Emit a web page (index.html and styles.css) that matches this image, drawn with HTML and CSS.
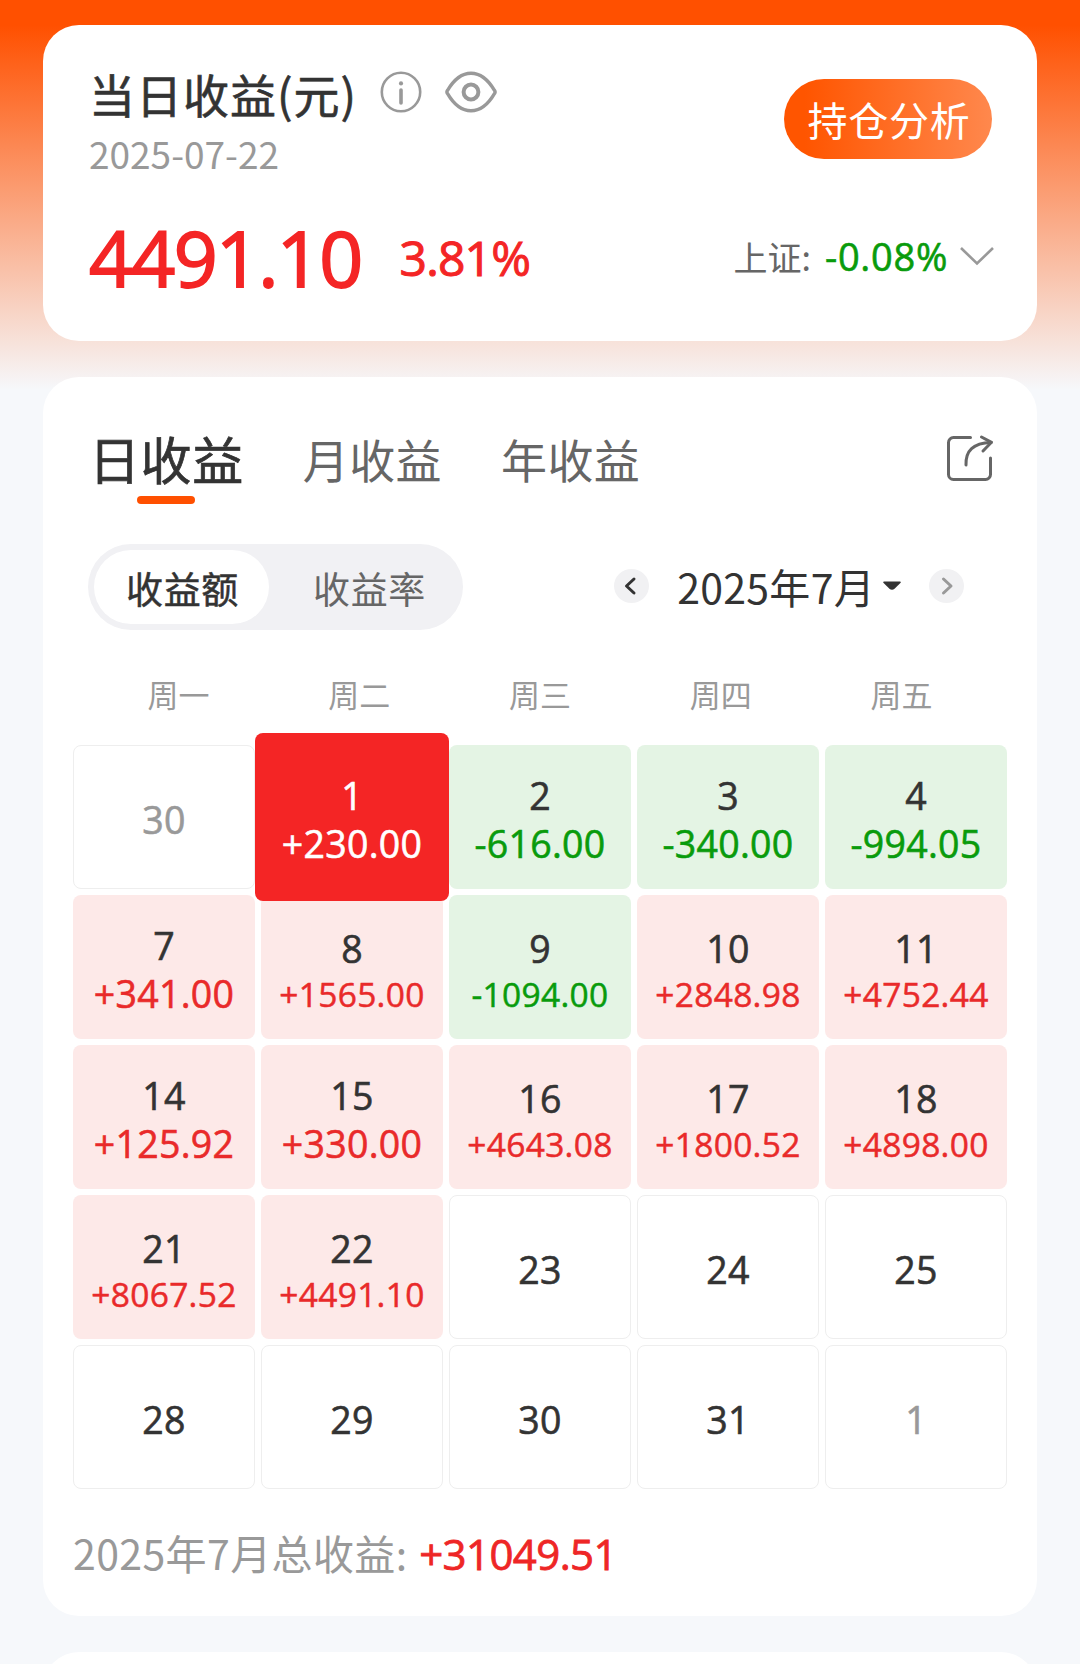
FILE: index.html
```html
<!DOCTYPE html>
<html lang="zh-CN">
<head>
    <meta charset="UTF-8">
    <meta name="viewport" content="width=device-width, initial-scale=1.0">
    <title>当日收益</title>
    <link rel="stylesheet" href="styles.css">
</head>
<body>

    <div class="card summary">
        <div class="summary-top">
            <div>
                <div class="title-row">
                    <h2>当日收益(元)</h2>
                    <svg class="icon-info" width="42" height="42" viewBox="0 0 42 42" fill="none" stroke="#999" stroke-width="2.6">
                        <circle cx="21" cy="21" r="19.2"/>
                        <path d="M21 19v13" stroke-width="3.6" stroke-linecap="round"/>
                        <circle cx="21" cy="12.4" r="2.1" fill="#999" stroke="none"/>
                    </svg>
                    <svg class="icon-eye" width="52" height="42" viewBox="0 0 52 42" fill="none" stroke="#999" stroke-width="3.4">
                        <path d="M2.4 22.4Q1.4 21 2.4 19.6C8 10 16 2.2 26 2.2S44 10 49.6 19.6Q50.6 21 49.6 22.4C44 32 36 39.8 26 39.8S8 32 2.4 22.4Z"/>
                        <circle cx="26" cy="21" r="7.4" stroke-width="4"/>
                    </svg>
                </div>
                <div class="date">2025-07-22</div>
            </div>
            <button class="analysis-btn">持仓分析</button>
        </div>
        <div class="summary-bottom">
            <span class="amount">4491.10</span>
            <span class="percent">3.81%</span>
            <div class="index">
                <span class="index-name">上证:</span>
                <span class="index-value">-0.08%</span>
                <svg width="36" height="20" viewBox="0 0 36 20" fill="none" stroke="#999" stroke-width="2.6">
                    <path d="M2 2l16 15.5L34 2"/>
                </svg>
            </div>
        </div>
    </div>

    <div class="card calendar">
        <div class="tabs">
            <span class="tab active">日收益</span>
            <span class="tab">月收益</span>
            <span class="tab">年收益</span>
            <svg class="icon-share" width="48" height="48" viewBox="0 0 48 48" fill="none" stroke="#666" stroke-width="3" stroke-linecap="round" stroke-linejoin="round">
                <path d="M24.500 3.500H7.500a5 5 0 0 0-5 5v32a5 5 0 0 0 5 5h32a5 5 0 0 0 5-5V24"/>
                <path d="M20 31C19.500 17 27 9 45 8.500"/>
                <path d="M35.500 3L45.500 8.300L37 17"/>
            </svg>
        </div>

        <div class="toolbar">
            <div class="switch">
                <span class="switch-item active">收益额</span>
                <span class="switch-item">收益率</span>
            </div>
            <div class="month">
                <span class="arrow">
                    <svg width="34" height="34" viewBox="0 0 34 34" fill="none" stroke="#333" stroke-width="3" stroke-linecap="round" stroke-linejoin="round"><path d="M20 10L12.500 17l7.500 7"/></svg>
                </span>
                <span class="month-text">2025年7月</span>
                <svg class="caret" width="18" height="10" viewBox="0 0 18 10"><path d="M1 .5h16q1.300.3.4 1.500L11.800 7.500q-2.800 2.600-5.600 0L.6 2Q-.3.800 1 .5Z" fill="#333"/></svg>
                <span class="arrow">
                    <svg width="34" height="34" viewBox="0 0 34 34" fill="none" stroke="#999" stroke-width="3" stroke-linecap="round" stroke-linejoin="round"><path d="M14.500 10L22 17l-7.500 7"/></svg>
                </span>
            </div>
        </div>

        <div class="week">
            <span>周一</span>
            <span>周二</span>
            <span>周三</span>
            <span>周四</span>
            <span>周五</span>
        </div>

        <div class="days">
            <div class="day other">30</div>
            <div class="day selected">1<span class="value">+230.00</span></div>
            <div class="day down">2<span class="value">-616.00</span></div>
            <div class="day down">3<span class="value">-340.00</span></div>
            <div class="day down">4<span class="value">-994.05</span></div>

            <div class="day up">7<span class="value">+341.00</span></div>
            <div class="day up">8<span class="value small">+1565.00</span></div>
            <div class="day down">9<span class="value small">-1094.00</span></div>
            <div class="day up">10<span class="value small">+2848.98</span></div>
            <div class="day up">11<span class="value small">+4752.44</span></div>

            <div class="day up">14<span class="value">+125.92</span></div>
            <div class="day up">15<span class="value">+330.00</span></div>
            <div class="day up">16<span class="value small">+4643.08</span></div>
            <div class="day up">17<span class="value small">+1800.52</span></div>
            <div class="day up">18<span class="value small">+4898.00</span></div>

            <div class="day up">21<span class="value small">+8067.52</span></div>
            <div class="day up">22<span class="value small">+4491.10</span></div>
            <div class="day">23</div>
            <div class="day">24</div>
            <div class="day">25</div>

            <div class="day">28</div>
            <div class="day">29</div>
            <div class="day">30</div>
            <div class="day">31</div>
            <div class="day other">1</div>
        </div>

        <div class="total">2025年7月总收益: <span class="total-value">+31049.51</span></div>
    </div>

    <div class="more">
        <div class="card next"></div>
    </div>

</body>
</html>
```
FILE: styles.css
```css
* {
    box-sizing: border-box;
}
body {
    margin: 0;
    padding: 25px 43px 0;
    height: 1664px;
    overflow: hidden;
    display: flex;
    flex-direction: column;
    gap: 36px;
    font-family: "Noto Sans CJK SC", sans-serif;
    color: #333;
    background: #f6f8fb linear-gradient(#ff5000 25px, #f6f8fb 390px) no-repeat;
}
.card {
    flex: none;
    background-color: #fff;
    border-radius: 36px;
}

/* summary */
.summary {
    height: 316px;
    padding: 40px 42px 0 46px;
}
.summary-top {
    display: flex;
    justify-content: space-between;
    align-items: flex-start;
}
.title-row {
    display: flex;
    align-items: center;
    height: 56px;
}
h2 {
    margin: 0;
    font-size: 46px;
    font-weight: 400;
    line-height: 56px;
    letter-spacing: 1px;
    -webkit-text-stroke: 0.6px;
}
.icon-info {
    margin: 0 0 2px 23px;
}
.icon-eye {
    margin: 0 0 2px 23px;
}
.date {
    font-size: 37px;
    line-height: 44px;
    margin-top: 10px;
    color: #999;
}
.analysis-btn {
    width: 208px;
    height: 80px;
    margin: 14px 3px 0 0;
    padding: 0 0 0 2px;
    border: none;
    border-radius: 40px;
    background: linear-gradient(90deg, #ff5500 10%, #ff884d);
    color: #fff;
    font-family: inherit;
    font-size: 40px;
    line-height: 78px;
    letter-spacing: 0.7px;
}
.summary-bottom {
    display: flex;
    align-items: center;
    height: 90px;
    margin-top: 37px;
    font-family: "Open Sans", sans-serif;
    color: #f42525;
    -webkit-text-stroke: 0.6px;
}
.amount {
    font-size: 77px;
    letter-spacing: -1.7px;
    -webkit-text-stroke: 1.8px;
}
.percent {
    font-size: 48px;
    letter-spacing: -0.8px;
    margin-left: 38px;
    -webkit-text-stroke: 1px;
}
.index {
    display: flex;
    align-items: center;
    margin-left: auto;
    padding-bottom: 2px;
}
.index-name {
    font-family: "Noto Sans CJK SC", sans-serif;
    font-size: 34px;
    color: #666;
    -webkit-text-stroke: 0;
}
.index-value {
    font-size: 38px;
    letter-spacing: 0.7px;
    margin: 0 11px 0 14px;
    color: #099b0c;
}

/* calendar */
.calendar {
    height: 1239px;
    padding: 41px 30px 0;
}
.tabs {
    display: flex;
    align-items: center;
    height: 80px;
    padding: 0 13px 0 16px;
}
.tab {
    font-size: 46px;
    line-height: 70px;
    letter-spacing: 0.4px;
    margin-right: 59px;
    color: #666;
}
.tab.active {
    position: relative;
    font-size: 51px;
    letter-spacing: 0.6px;
    margin-right: 59px;
    color: #333;
    -webkit-text-stroke: 0.7px;
}
.tab.active::after {
    content: "";
    position: absolute;
    left: 48px;
    bottom: -11px;
    width: 58px;
    height: 8px;
    border-radius: 4px;
    background-color: #ff5000;
}
.icon-share {
    margin-left: auto;
    margin-bottom: 1px;
}
.toolbar {
    display: flex;
    align-items: center;
    justify-content: space-between;
    margin-top: 46px;
    padding: 0 43px 0 15px;
}
.switch {
    display: flex;
    width: 375px;
    height: 86px;
    padding: 6px;
    border-radius: 43px;
    background-color: #f1f1f4;
}
.switch-item {
    flex: 1;
    font-size: 37px;
    line-height: 76px;
    letter-spacing: 0.6px;
    text-align: center;
    color: #666;
    padding-left: 13px;
}
.switch-item.active {
    flex: 0 0 175px;
    border-radius: 37px;
    padding-left: 2px;
    background-color: #fff;
    color: #333;
    -webkit-text-stroke: 0.5px;
}
.month {
    display: flex;
    align-items: center;
    height: 84px;
    padding-bottom: 2px;
}
.arrow {
    width: 35px;
    height: 34px;
    border-radius: 50%;
    background-color: #f1f1f3;
}
.arrow svg {
    display: block;
}
.month-text {
    font-size: 41px;
    letter-spacing: 0.3px;
    margin-left: 28px;
}
.caret {
    margin: 0 28px 0 8px;
}
.week {
    display: grid;
    grid-template-columns: repeat(5, 1fr);
    padding: 0 15px;
    margin-top: 39px;
    font-size: 31px;
    line-height: 50px;
    text-align: center;
    color: #999;
}
.days {
    display: grid;
    grid-template-columns: repeat(5, 182px);
    grid-auto-rows: 144px;
    gap: 6px;
    margin-top: 26px;
    font-family: "Open Sans", sans-serif;
    font-size: 37.5px;
    line-height: 48px;
    letter-spacing: 0.3px;
    -webkit-text-stroke: 0.6px;
}
.day {
    display: flex;
    flex-direction: column;
    align-items: center;
    justify-content: center;
    padding-top: 5px;
    border: 1px solid #eee;
    border-radius: 8px;
}
.day.other {
    color: #999;
}
.day.up {
    border: none;
    background-color: #fde9e8;
}
.day.down {
    border: none;
    background-color: #e4f4e4;
}
.day.selected {
    z-index: 1;
    margin: -12px -6px;
    border: none;
    background-color: #f42525;
    color: #fff;
}
.up .value {
    color: #e92a2a;
}
.down .value {
    color: #099b0c;
}
.value.small {
    font-size: 33.5px;
    line-height: 42px;
    -webkit-text-stroke: 0.5px;
}
.total {
    margin-top: 32px;
    font-size: 41px;
    line-height: 62px;
    letter-spacing: 0.4px;
    color: #999;
}
.total-value {
    font-family: "Open Sans", sans-serif;
    font-size: 42px;
    letter-spacing: -0.6px;
    margin-left: 2px;
    color: #ee2626;
    -webkit-text-stroke: 0.8px;
}

/* top edge of the following card */
.more {
    flex: none;
    height: 12px;
    overflow: hidden;
}
.next {
    height: 80px;
}
```
